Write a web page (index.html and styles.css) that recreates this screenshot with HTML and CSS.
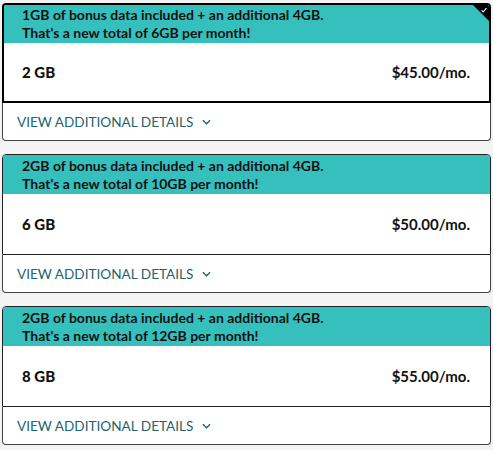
FILE: index.html
```html
<!DOCTYPE html>
<html>
<head>
  <link rel="stylesheet" href="styles.css">
</head>
<body>
  <div class="plans">
    <div class="plan selected">
      <div class="plan-main">
        <span class="check">
          <svg viewBox="0 0 10 10" fill="none" stroke="#fff" stroke-width="1.4">
            <path d="M2 5.5l2 2 4-5"/>
          </svg>
        </span>
        <div class="promo">
          1GB of bonus data included + an additional 4GB.<br>
          That's a new total of 6GB per month!
        </div>
        <div class="plan-row">
          <span class="plan-size">2 GB</span>
          <span class="plan-price">$45.00/mo.</span>
        </div>
      </div>
      <div class="plan-details">
        <span>VIEW ADDITIONAL DETAILS</span>
        <svg class="chevron" viewBox="0 0 10 6" fill="none" stroke="currentColor" stroke-width="1.5">
          <path d="M1 1l4 4 4-4"/>
        </svg>
      </div>
    </div>

    <div class="plan">
      <div class="plan-main">
        <div class="promo">
          2GB of bonus data included + an additional 4GB.<br>
          That's a new total of 10GB per month!
        </div>
        <div class="plan-row">
          <span class="plan-size">6 GB</span>
          <span class="plan-price">$50.00/mo.</span>
        </div>
      </div>
      <div class="plan-details">
        <span>VIEW ADDITIONAL DETAILS</span>
        <svg class="chevron" viewBox="0 0 10 6" fill="none" stroke="currentColor" stroke-width="1.5">
          <path d="M1 1l4 4 4-4"/>
        </svg>
      </div>
    </div>

    <div class="plan">
      <div class="plan-main">
        <div class="promo">
          2GB of bonus data included + an additional 4GB.<br>
          That's a new total of 12GB per month!
        </div>
        <div class="plan-row">
          <span class="plan-size">8 GB</span>
          <span class="plan-price">$55.00/mo.</span>
        </div>
      </div>
      <div class="plan-details">
        <span>VIEW ADDITIONAL DETAILS</span>
        <svg class="chevron" viewBox="0 0 10 6" fill="none" stroke="currentColor" stroke-width="1.5">
          <path d="M1 1l4 4 4-4"/>
        </svg>
      </div>
    </div>
  </div>
</body>
</html>
```

FILE: styles.css
```css
body {
  margin: 0;
  padding: 3px 2px;
  background: #f3f3f3;
  font-family: Lato, "Open Sans", sans-serif;
  color: #111;
}
.plans {
  display: flex;
  flex-direction: column;
  gap: 13px;
}
.plan {
  background: #fff;
  border-radius: 4px;
}
.plan-main {
  position: relative;
  border: 1px solid #222;
  border-radius: 4px 4px 0 0;
  overflow: hidden;
}
.promo {
  background: #36c0bd;
  padding: 2px 19px 1px;
  font-size: 14px;
  font-weight: 700;
  line-height: 18px;
}
.plan-row {
  display: flex;
  align-items: center;
  justify-content: space-between;
  height: 60px;
  padding: 0 20px 0 19px;
  font-size: 15px;
}
.plan-size {
  font-weight: 900;
}
.plan-price {
  font-weight: 700;
}
.plan-details {
  display: flex;
  align-items: center;
  gap: 9px;
  height: 37px;
  padding-left: 14px;
  border: 1px solid #444;
  border-top: none;
  border-radius: 0 0 4px 4px;
  color: #1f6469;
  font-size: 13.6px;
}
.chevron {
  width: 9px;
  height: 6px;
}
.selected .plan-main {
  border: 2px solid #000;
}
.selected .promo {
  padding: 1px 18px 1px;
}
.selected .plan-row {
  height: 58px;
  padding: 0 19px 0 18px;
}
.check {
  position: absolute;
  top: 0;
  right: 0;
  width: 16px;
  height: 16px;
  background: #000;
  clip-path: polygon(0 0, 100% 0, 100% 100%);
}
.check svg {
  position: absolute;
  top: 1px;
  right: 1px;
  width: 8px;
  height: 8px;
}
```
